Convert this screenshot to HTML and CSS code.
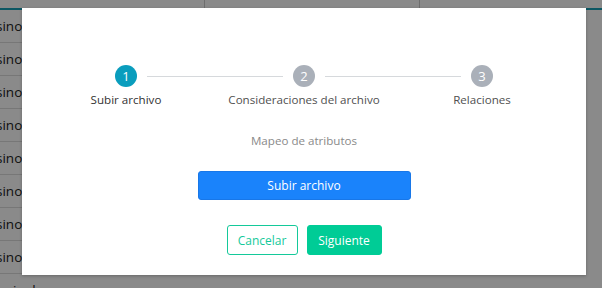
FILE: index.html
```html
<!DOCTYPE html>
<html lang="es">
<head>
    <meta charset="UTF-8">
    <meta name="viewport" content="width=device-width, initial-scale=1.0">
    <title>Subir archivo</title>
    <link rel="stylesheet" href="styles.css">
</head>
<body>
    <div class="page">
        <div class="table-head">
            <div class="th"></div>
            <div class="th"></div>
            <div class="th"></div>
        </div>
        <div class="rows">
            <div class="row">Casino</div>
            <div class="row">Casino</div>
            <div class="row">Casino</div>
            <div class="row">Casino</div>
            <div class="row">Casino</div>
            <div class="row">Casino</div>
            <div class="row">Casino</div>
            <div class="row">Casino</div>
            <div class="row">Terminal</div>
        </div>
    </div>

    <div class="backdrop"></div>

    <div class="modal">
        <div class="steps">
            <div class="step active">
                <span class="dot">1</span>
                <span class="label">Subir archivo</span>
            </div>
            <div class="step">
                <span class="dot">2</span>
                <span class="label">Consideraciones del archivo</span>
            </div>
            <div class="step">
                <span class="dot">3</span>
                <span class="label">Relaciones</span>
            </div>
        </div>

        <p class="subtitle">Mapeo de atributos</p>

        <div class="upload">
            <button class="btn-upload">Subir archivo</button>
        </div>

        <div class="actions">
            <button class="btn-cancel">Cancelar</button>
            <button class="btn-next">Siguiente</button>
        </div>
    </div>
</body>
</html>
```
FILE: styles.css
```css
* {box-sizing: border-box;}
html, body {height: 288px; overflow: hidden;}
body {margin: 0; font-family: "Open Sans", "Noto Sans", sans-serif; background: #fff;}

/* table behind the dialog */
.page {margin-left: -22px; width: 650px; height: 288px; overflow: hidden;}
.table-head {display: flex; height: 10px; border-bottom: 2px solid #17a2b8;}
.th {flex: 1; border-right: 1px solid #ccc;}
.th:first-child {flex: 0 0 227px;}
.th:nth-child(2) {flex: 0 0 215px;}
.row {height: 33px; line-height: 33px; padding-left: 2px; font-size: 13.5px; color: #1a1d20; border-bottom: 1px solid #ddd; width: 130px;}

.backdrop {position: absolute; inset: 0; background: rgba(0,0,0,0.46);}

.modal {position: absolute; left: 22px; top: 8px; width: 564px; height: 267px; background: #fff; padding: 57px 15px 0; box-shadow: 0 1px 3px rgba(0,0,0,0.25);}

.steps {display: flex;}
.step {flex: 1; display: flex; flex-direction: column; align-items: center; position: relative;}
.step + .step::before {content: ""; position: absolute; top: 11px; left: calc(-50% + 21px); right: calc(50% + 21px); height: 1px; background: #d6d9dc;}
.dot {width: 22px; height: 22px; border-radius: 50%; background: #aab0b9; color: #fff; font-size: 13px; line-height: 22px; text-align: center;}
.step.active .dot {background: #0a9dbd;}
.label {margin-top: 4px; font-size: 11.6px; line-height: 17px; color: #505050;}
.step.active .label {color: #333;}

.subtitle {margin: 24px 0 0; text-align: center; font-size: 11.6px; line-height: 17px; color: #8a8a8a;}

.upload {display: flex; justify-content: center; margin-top: 22px;}
.btn-upload {width: 213px; height: 29px; border: 1px solid #1877e8; border-radius: 3px; background: #1a83fb; color: #fff; font-family: inherit; font-size: 12px;}

.actions {display: flex; justify-content: center; gap: 9px; margin-top: 25px;}
.actions button {height: 30px; border-radius: 3px; font-family: inherit; font-size: 12px;}
.btn-cancel {width: 71px; background: #fff; border: 1px solid #14c99a; color: #14c99a;}
.btn-next {width: 75px; background: #00cc96; border: 1px solid #00cc96; color: #fff;}
```
